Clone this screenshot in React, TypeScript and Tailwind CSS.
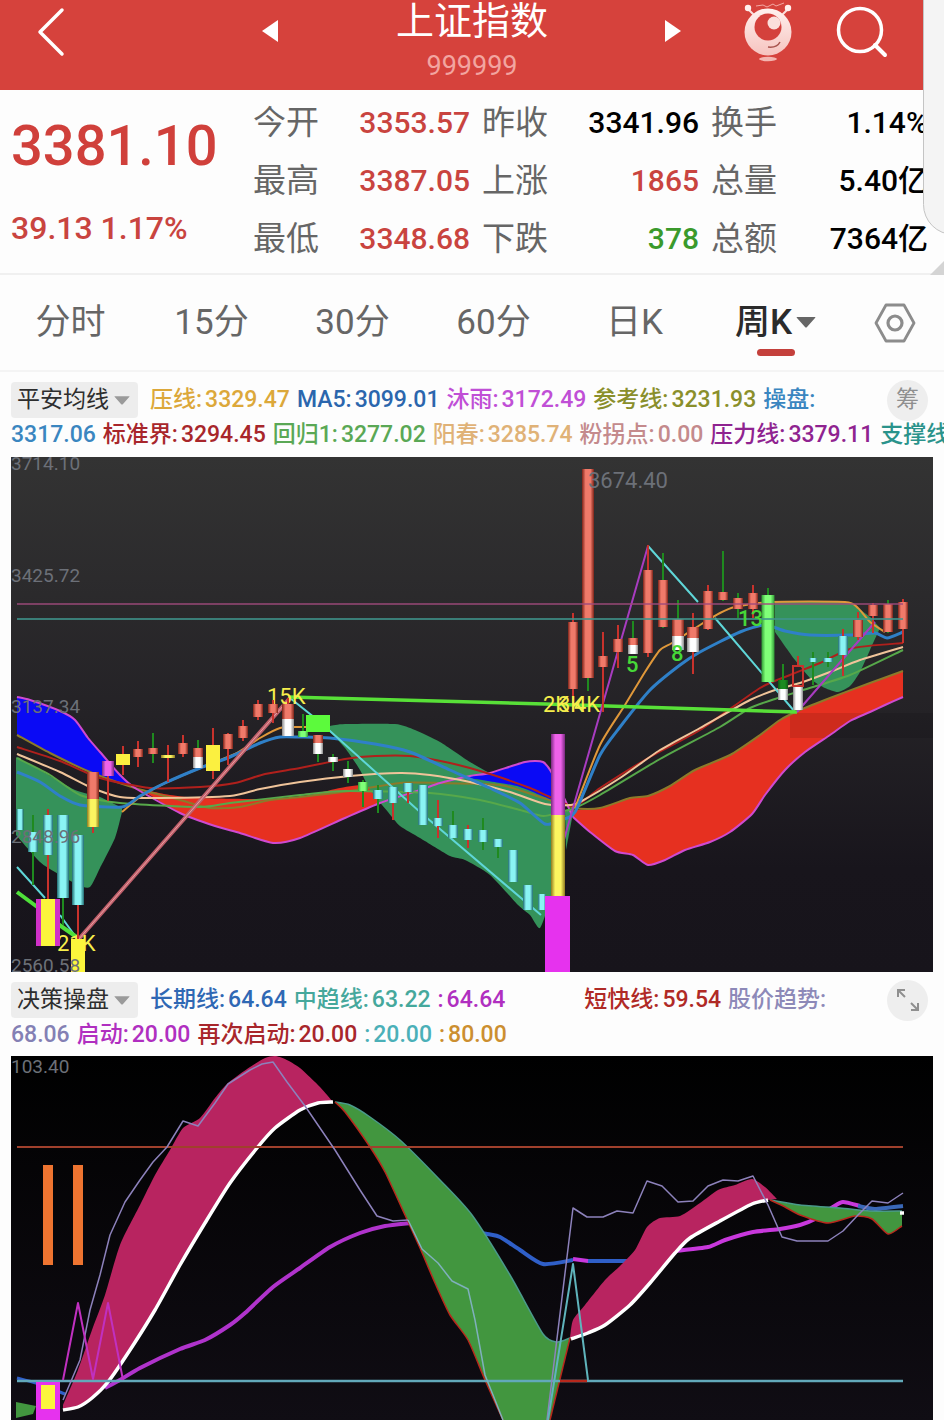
import { useState } from 'react';

type Entry = {
  name: string;
  value?: string;
  color: string;
  spaced?: boolean;
};

type Tone = 'red' | 'cyan' | 'white' | 'yellow' | 'magenta' | 'lime' | 'dark';

type Candle = {
  x: number;
  wick?: [number, number, string];
  parts: Array<[number, number, Tone]>;
  w?: number;
};

const STATS = [
  { label: '今开', value: '3353.57', color: 'text-[#c9443f]' },
  { label: '昨收', value: '3341.96', color: 'text-black' },
  { label: '换手', value: '1.14%', color: 'text-black' },
  { label: '最高', value: '3387.05', color: 'text-[#c9443f]' },
  { label: '上涨', value: '1865', color: 'text-[#c9443f]' },
  { label: '总量', value: '5.40亿', color: 'text-black' },
  { label: '最低', value: '3348.68', color: 'text-[#c9443f]' },
  { label: '下跌', value: '378', color: 'text-[#3a9a2c]' },
  { label: '总额', value: '7364亿', color: 'text-black' },
];

const PERIODS = ['分时', '15分', '30分', '60分', '日K', '周K'];

const MAIN_ROWS: Entry[][] = [
  [
    { name: '压线:', value: '3329.47', color: 'text-[#dca83a]' },
    { name: 'MA5:', value: '3099.01', color: 'text-[#2b66ad]' },
    { name: '沐雨:', value: '3172.49', color: 'text-[#c04fd6]' },
    { name: '参考线:', value: '3231.93', color: 'text-[#8a8f2b]' },
    { name: '操盘:', color: 'text-[#3a86c0]' },
  ],
  [
    { name: '', value: '3317.06', color: 'text-[#3a86c0]' },
    { name: '标准界:', value: '3294.45', color: 'text-[#a8262b]' },
    { name: '回归1:', value: '3277.02', color: 'text-[#5aa855]' },
    { name: '阳春:', value: '3285.74', color: 'text-[#e0b277]' },
    { name: '粉拐点:', value: '0.00', color: 'text-[#c48a8c]' },
    { name: '压力线:', value: '3379.11', color: 'text-[#8f2390]' },
    { name: '支撑线:', color: 'text-[#2a938b]' },
  ],
];

const SUB_ROWS: Entry[][] = [
  [
    { name: '长期线:', value: '64.64', color: 'text-[#2f68b4]' },
    { name: '中趋线:', value: '63.22', color: 'text-[#45a89c]' },
    { name: ':', value: '64.64', color: 'text-[#b02fc0]' },
    { name: '短快线:', value: '59.54', color: 'text-[#b02a26]', spaced: true },
    { name: '股价趋势:', color: 'text-[#8d89b8]' },
  ],
  [
    { name: '', value: '68.06', color: 'text-[#8480b4]' },
    { name: '启动:', value: '20.00', color: 'text-[#b02fc0]' },
    { name: '再次启动:', value: '20.00', color: 'text-[#a8262b]' },
    { name: ':', value: '20.00', color: 'text-[#4bb0b8]' },
    { name: ':', value: '80.00', color: 'text-[#cc8f30]' },
  ],
];

const R = '#c8322c';
const G = '#1f8a1f';

const CANDLES: Candle[] = [
  { x: 20, parts: [[809, 830, 'cyan']], w: 7 },
  { x: 33, wick: [815, 885, G], parts: [[832, 852, 'cyan']] },
  { x: 48, wick: [809, 900, R], parts: [[815, 855, 'cyan']] },
  { x: 63, wick: [815, 925, G], parts: [[815, 898, 'cyan']], w: 12 },
  { x: 78, wick: [835, 940, R], parts: [[835, 905, 'cyan']], w: 12 },
  { x: 93, wick: [772, 833, R], parts: [[772, 799, 'red'], [799, 827, 'yellow']], w: 12 },
  { x: 108, wick: [761, 801, R], parts: [[761, 776, 'magenta']], w: 12 },
  { x: 138, wick: [741, 767, R], parts: [[749, 757, 'red']] },
  { x: 153, wick: [733, 763, G], parts: [[748, 754, 'red']] },
  { x: 168, wick: [745, 782, R], parts: [[755, 758, 'yellow']], w: 14 },
  { x: 183, wick: [735, 757, R], parts: [[743, 754, 'red']] },
  { x: 198, wick: [740, 757, G], parts: [[748, 757, 'red'], [757, 768, 'white']] },
  { x: 228, wick: [733, 765, R], parts: [[734, 749, 'red']] },
  { x: 243, wick: [720, 741, R], parts: [[726, 738, 'red']] },
  { x: 258, wick: [700, 720, R], parts: [[704, 717, 'red']] },
  { x: 273, wick: [700, 723, R], parts: [[704, 713, 'red']] },
  { x: 288, wick: [698, 736, R], parts: [[704, 719, 'red'], [719, 736, 'white']], w: 12 },
  { x: 303, wick: [714, 737, G], parts: [[731, 737, 'lime']] },
  { x: 318, wick: [735, 762, G], parts: [[735, 743, 'red'], [743, 754, 'white']] },
  { x: 333, wick: [754, 771, G], parts: [[757, 762, 'white']] },
  { x: 348, wick: [761, 783, G], parts: [[769, 777, 'white']] },
  { x: 363, wick: [780, 807, G], parts: [[782, 791, 'lime']] },
  { x: 378, wick: [785, 813, G], parts: [[790, 799, 'cyan']] },
  { x: 393, wick: [787, 820, R], parts: [[787, 803, 'cyan']] },
  { x: 408, wick: [783, 803, R], parts: [[783, 792, 'cyan']] },
  { x: 423, parts: [[785, 825, 'cyan']] },
  { x: 438, wick: [800, 838, R], parts: [[818, 826, 'cyan']] },
  { x: 453, wick: [811, 838, G], parts: [[825, 838, 'cyan']] },
  { x: 468, wick: [825, 848, R], parts: [[829, 840, 'cyan']] },
  { x: 483, wick: [818, 850, G], parts: [[830, 842, 'cyan']] },
  { x: 498, wick: [839, 858, G], parts: [[839, 847, 'cyan']] },
  { x: 513, parts: [[850, 882, 'cyan']] },
  { x: 528, parts: [[885, 910, 'cyan']] },
  { x: 542, parts: [[894, 910, 'cyan']], w: 8 },
  { x: 558, parts: [[734, 815, 'magenta'], [815, 896, 'yellow']], w: 14 },
  { x: 573, wick: [613, 712, R], parts: [[622, 689, 'red']] },
  { x: 588, wick: [470, 691, G], parts: [[469, 678, 'red']], w: 12 },
  { x: 603, wick: [632, 712, R], parts: [[656, 667, 'red']] },
  { x: 618, wick: [625, 668, R], parts: [[639, 652, 'red']] },
  { x: 633, wick: [621, 650, G], parts: [[638, 645, 'red'], [645, 654, 'white']] },
  { x: 648, wick: [545, 657, R], parts: [[570, 653, 'red']] },
  { x: 663, wick: [553, 628, G], parts: [[580, 627, 'red']] },
  { x: 678, wick: [600, 640, G], parts: [[619, 636, 'red'], [636, 650, 'white']], w: 12 },
  { x: 693, wick: [613, 674, R], parts: [[627, 638, 'red'], [638, 652, 'white']], w: 12 },
  { x: 708, wick: [585, 630, R], parts: [[591, 629, 'red']] },
  { x: 723, wick: [551, 601, G], parts: [[592, 600, 'red']] },
  { x: 738, wick: [593, 618, G], parts: [[598, 609, 'red']] },
  { x: 753, wick: [585, 618, R], parts: [[593, 609, 'red']] },
  { x: 768, wick: [588, 682, G], parts: [[595, 682, 'lime']], w: 13 },
  { x: 783, wick: [664, 690, G], parts: [[680, 689, 'dark'], [689, 700, 'white']] },
  { x: 798, wick: [656, 667, R], parts: [[686, 710, 'white']] },
  { x: 813, wick: [652, 685, G], parts: [[658, 662, 'cyan']], w: 8 },
  { x: 828, wick: [652, 667, G], parts: [[658, 662, 'cyan']] },
  { x: 843, wick: [629, 676, R], parts: [[636, 655, 'cyan']] },
  { x: 858, wick: [612, 640, R], parts: [[620, 637, 'red']] },
  { x: 873, wick: [603, 633, R], parts: [[605, 616, 'red']] },
  { x: 888, wick: [600, 633, G], parts: [[604, 632, 'red']] },
  { x: 903, wick: [599, 643, R], parts: [[602, 629, 'red']] },
];

const TONES: Array<[Tone, string, string]> = [
  ['red', '#7d2318', '#f07a6a'],
  ['cyan', '#1f6a70', '#8af4f4'],
  ['white', '#8a8a8a', '#ffffff'],
  ['yellow', '#8f7a20', '#fbf560'],
  ['magenta', '#7a2a80', '#ee62ea'],
  ['lime', '#2f9a35', '#80ff78'],
  ['dark', '#0f5a14', '#1b8a20'],
];

// Catmull-Rom style spline through "x,y x,y ..." points, slightly tightened
function curve(points: string, start: 'M' | 'L' = 'M') {
  const p = points.split(' ').map((s) => s.split(',').map(Number));
  let d = `${start}${p[0][0]} ${p[0][1]}`;
  for (let i = 0; i < p.length - 1; i++) {
    const a = p[i - 1] ?? p[i];
    const b = p[i];
    const c = p[i + 1];
    const e = p[i + 2] ?? c;
    d += `C${b[0] + (c[0] - a[0]) / 9} ${b[1] + (c[1] - a[1]) / 9} ${c[0] - (e[0] - b[0]) / 9} ${
      c[1] - (e[1] - b[1]) / 9
    } ${c[0]} ${c[1]}`;
  }
  return d;
}

function Line({ pts, stroke, width = 2 }: { pts: string; stroke: string; width?: number }) {
  return <path d={curve(pts)} fill="none" stroke={stroke} strokeWidth={width} strokeLinejoin="round" />;
}

function Band({ top, bottom, fill }: { top: string; bottom: string; fill: string }) {
  const back = bottom.split(' ').reverse().join(' ');
  return <path d={`${curve(top)}${curve(back, 'L')}Z`} fill={fill} />;
}

function Caret({ className }: { className: string }) {
  return (
    <svg viewBox="0 0 20 12" className={className} aria-hidden>
      <path d="M1 0h18q1 0 0 1l-8 9q-1 1-2 0L1 1q-1-1 0-1z" fill="currentColor" />
    </svg>
  );
}

function Mascot() {
  return (
    <svg viewBox="0 0 50 60" className="h-[60px] w-[50px]" aria-hidden>
      <defs>
        <linearGradient id="mascot" x1="0" y1="0" x2="0" y2="1">
          <stop offset="0" stopColor="#fff1ee" />
          <stop offset="1" stopColor="#f6c3bf" />
        </linearGradient>
      </defs>
      <path d="M5 7l7 7M45 7l-7 7" stroke="#fbdedb" strokeWidth="2" />
      <circle cx="5" cy="6" r="3.2" fill="#fff0ee" />
      <circle cx="45" cy="6" r="3.2" fill="#fff0ee" />
      <path d="M13 4l7-1 4 2 6-3 3 2 8-3" fill="none" stroke="#f4a9a4" strokeWidth="1" />
      <circle cx="25" cy="30" r="23.5" fill="url(#mascot)" />
      <circle cx="25" cy="25" r="13.5" fill="#d4413c" />
      <circle cx="31" cy="21" r="6.5" fill="#fbe0dc" />
      <path d="M25 45q9 1 12-5" fill="none" stroke="#a8554f" strokeWidth="1.5" />
      <ellipse cx="25" cy="57" rx="9" ry="2.2" fill="#f3b5b0" />
    </svg>
  );
}

function Header() {
  return (
    <header className="grid h-[90px] grid-cols-[1fr_auto_1fr] items-start bg-[#d6423c] text-white">
      <div className="flex h-16 items-center pl-[37px]">
        <button type="button" aria-label="返回">
          <svg viewBox="0 0 28 50" className="h-[50px] w-7" aria-hidden>
            <path
              d="M25 3L3 25l22 22"
              fill="none"
              stroke="currentColor"
              strokeWidth="3.5"
              strokeLinecap="round"
              strokeLinejoin="round"
            />
          </svg>
        </button>
      </div>
      <div className="flex w-[420px] items-start justify-between">
        <button type="button" aria-label="上一个" className="flex h-[62px] items-center">
          <svg viewBox="0 0 17 24" className="h-6 w-[17px]" aria-hidden>
            <path d="M0 12L16 1v22z" fill="currentColor" />
          </svg>
        </button>
        <div className="text-center">
          <h1 className="text-[38px] leading-[42px]">上证指数</h1>
          <p className="text-[27px] leading-[48px] text-[#f2a5a0]">999999</p>
        </div>
        <button type="button" aria-label="下一个" className="flex h-[62px] items-center">
          <svg viewBox="0 0 17 24" className="h-6 w-[17px]" aria-hidden>
            <path d="M16 12L0 1v22z" fill="currentColor" />
          </svg>
        </button>
      </div>
      <div className="flex h-16 items-center justify-end gap-[43px] pr-[56px]">
        <button type="button" aria-label="助手">
          <Mascot />
        </button>
        <button type="button" aria-label="搜索">
          <svg viewBox="0 0 52 52" className="h-[52px] w-[52px]" aria-hidden>
            <circle cx="24" cy="24" r="21.5" fill="none" stroke="currentColor" strokeWidth="3.5" />
            <path d="M39 39l10 10" stroke="currentColor" strokeWidth="4" strokeLinecap="round" />
          </svg>
        </button>
      </div>
    </header>
  );
}

function Quote() {
  return (
    <section className="flex h-[185px] border-b-2 border-[#f0f0f0] pr-4 pl-[11px]">
      <div className="w-[242px] shrink-0 font-medium text-[#d0403b]">
        <p className="pt-6 text-[56px] leading-[64px]">3381.10</p>
        <p className="pt-[26px] text-[32px] leading-[48px] text-[#c9443f]">39.13 1.17%</p>
      </div>
      <dl className="grid flex-1 auto-rows-[58px] grid-cols-3 gap-x-3 pt-1">
        {STATS.map((s) => (
          <div key={s.label} className="flex items-center justify-between whitespace-nowrap">
            <dt className="text-[33px] leading-[58px] text-[#666666]">{s.label}</dt>
            <dd className={`text-[30px] leading-[58px] font-medium ${s.color}`}>{s.value}</dd>
          </div>
        ))}
      </dl>
    </section>
  );
}

function Periods() {
  const [active, setActive] = useState('周K');

  return (
    <nav className="flex h-[97px] border-b-2 border-[#f4f4f4]">
      {PERIODS.map((p) => (
        <button
          key={p}
          type="button"
          onClick={() => setActive(p)}
          className={`relative flex flex-1 items-center justify-center gap-1 text-[35px] leading-[48px] ${
            p === active ? 'font-medium text-[#2b2b2b]' : 'text-[#666666]'
          }`}
        >
          {p}
          {p === '周K' && <Caret className="h-3 w-5 text-[#666666]" />}
          {p === active && (
            <span className="absolute bottom-3.5 left-1/2 h-[7px] w-[38px] -translate-x-1/2 rounded-full bg-[#c4403c]" />
          )}
        </button>
      ))}
      <button
        type="button"
        aria-label="设置"
        className="flex w-[98px] shrink-0 items-center justify-center text-[#8c8c8c]"
      >
        <svg viewBox="0 0 42 40" className="h-10 w-[42px]" aria-hidden>
          <g fill="none" stroke="currentColor" strokeWidth="2.8" strokeLinejoin="round">
            <path d="M12 2h18l10 18-10 18H12L2 20z" />
            <circle cx="21" cy="20" r="7" strokeWidth="3.2" />
          </g>
        </svg>
      </button>
    </nav>
  );
}

function Entries({ items }: { items: Entry[] }) {
  return (
    <>
      {items.map((e, i) => (
        <span key={i} className={`flex gap-[3px] ${e.color} ${e.spaced ? 'ml-[72px]' : ''}`}>
          {e.name && <span>{e.name}</span>}
          {e.value && <span>{e.value}</span>}
        </span>
      ))}
    </>
  );
}

function Legend({
  title,
  rows,
  action,
}: {
  title: string;
  rows: Entry[][];
  action: React.ReactNode;
}) {
  return (
    <div className="overflow-hidden pt-2 pb-[7px] pl-[11px] text-[23px] leading-[30px] font-medium whitespace-nowrap">
      <div className="flex h-10 items-center gap-[7px] pr-4">
        <div className="relative mr-[5px] w-[127px] shrink-0">
          <select
            aria-label="指标"
            className="block h-9 w-full appearance-none rounded bg-[#ededed] pl-[6px] font-normal text-[#2e2e2e]"
          >
            <option>{title}</option>
          </select>
          <Caret className="pointer-events-none absolute top-3.5 right-2 h-[10px] w-4 text-[#9a9a9a]" />
        </div>
        <Entries items={rows[0]} />
        {action}
      </div>
      <div className="flex h-[30px] items-center gap-[7px]">
        <Entries items={rows[1]} />
      </div>
    </div>
  );
}

const SIGNAL =
  '17,735 50,753 90,772 135,788 180,800 210,808 240,807 270,800 300,797 350,791 400,783 440,783 500,785 540,797 575,808 600,808 630,798 648,796 670,786 695,770 730,755 760,735 780,720 800,710 830,698 870,683 903,671';
const LOWER_RIGHT =
  '573,817 590,832 615,851 633,855 648,865 665,860 685,850 710,842 730,832 752,814 765,795 785,770 805,752 830,735 850,721 870,712 885,705 903,697';

function MainChart() {
  return (
    <svg
      viewBox="11 457 922 515"
      className="block w-full overflow-visible"
      role="img"
      aria-label="周K线图"
    >
      <defs>
        <linearGradient id="bg" x1="0" y1="0" x2="0" y2="1">
          <stop offset="0" stopColor="#333333" />
          <stop offset="0.5" stopColor="#242226" />
          <stop offset="0.8" stopColor="#18151c" />
          <stop offset="1" stopColor="#17141b" />
        </linearGradient>
        {TONES.map(([name, edge, mid]) => (
          <linearGradient key={name} id={`tone-${name}`}>
            <stop offset="0" stopColor={edge} />
            <stop offset="0.3" stopColor={mid} />
            <stop offset="0.7" stopColor={mid} />
            <stop offset="1" stopColor={edge} />
          </linearGradient>
        ))}
      </defs>
      <rect x="11" y="457" width="922" height="515" fill="url(#bg)" />

      {/* Filled bands */}
      <Band
        top="17,697 30,700 60,711 75,720 88,738 100,752 120,775 137,789"
        bottom="17,735 50,753 90,772 137,789"
        fill="#0a0af5"
      />
      <Band
        top="16,757 40,770 75,790 100,797 122,808"
        bottom="16,835 40,862 55,872 78,885 90,887 100,868 115,838 122,812"
        fill="#35925a"
      />
      <Band
        top="145,790 170,795 200,798 260,799 300,797 340,788 370,784 435,783"
        bottom="145,792 180,813 215,826 240,833 273,843 300,838 345,818 380,803 420,790 435,784"
        fill="#e63020"
      />
      <Band
        top="330,726 345,724 395,724 415,730 440,742 470,762 490,773 520,785 552,798"
        bottom="330,732 345,748 360,770 370,790 388,812 400,826 420,838 450,856 465,860 490,875 518,905 530,915 540,928 550,900 557,870"
        fill="#35925a"
      />
      <Band
        top="463,777 490,773 525,762 543,762 553,775"
        bottom="463,777 500,783 520,787 552,800"
        fill="#0a0af5"
      />
      <Band
        top="775,602 845,602 855,606 870,617 880,628"
        bottom="775,632 795,660 812,680 825,688 838,692 850,686 860,672 870,650 880,628"
        fill="#35925a"
      />
      <Band
        top="573,810 600,808 630,798 648,796 670,786 695,770 730,755 760,735 780,720 800,710 830,698 870,683 903,671"
        bottom={LOWER_RIGHT}
        fill="#e63020"
      />
      <rect x="790" y="713" width="143" height="25" fill="#000" opacity="0.1" />
      <path d="M565 812L574 808 566 850z" fill="#35925a" />

      {/* Moving averages */}
      <Line stroke="#8c7a2a" pts={SIGNAL} />
      <Line
        stroke="#cf4ad0"
        pts="17,697 30,700 60,711 75,720 88,738 100,752 120,775 135,788 180,813 215,826 240,833 273,843 300,838 345,818 380,803 420,790 440,783 470,776 490,773 525,762 543,762 553,775 573,817"
      />
      <Line stroke="#cf4ad0" pts={LOWER_RIGHT} />
      <Line
        stroke="#b0201c"
        pts="17,747 60,761 100,778 150,788 200,787 235,783 265,774 300,768 345,759 375,756 410,756 450,763 490,774 530,788 550,797 575,806 600,788 650,757 700,730 760,688 790,675 820,663 853,648 903,643"
      />
      <Line
        stroke="#57a84a"
        pts="17,758 50,775 80,795 120,803 200,807 230,803 300,795 345,791 430,793 480,800 520,810 543,816 560,812 575,808 600,795 660,759 720,727 750,708 775,699 800,691 850,675 903,650"
      />
      <Line
        stroke="#f0c49a"
        pts="17,754 60,772 90,787 120,797 160,798 230,796 260,789 300,782 350,776 400,773 430,775 470,782 510,792 545,804 570,805 580,802 620,778 660,750 700,728 750,700 775,690 800,683 830,672 860,660 903,647"
      />
      <Line stroke="#e0983a" pts="122,812 140,797 165,783 200,768 235,754 260,738 280,728 300,727 318,727" />
      <Line
        stroke="#e0983a"
        pts="575,808 600,745 625,705 645,672 660,650 672,643 700,625 720,613 735,607 770,602 845,602 858,608 870,622 885,632"
      />
      <Line
        width={3}
        stroke="#2f80c8"
        pts="17,772 40,782 60,796 80,805 122,807 140,796 165,783 200,768 230,757 260,743 280,737 300,737 330,738 375,744 410,752 450,770 490,788 520,803 545,824 560,820 575,812 600,755 620,727 650,690 680,665 700,652 740,632 765,625 785,631 810,635 850,635 875,633 887,638 903,632"
      />

      {/* Swing lines */}
      <g fill="none">
        <path
          d="M17 867L45 898M60 915L78 940M290 698L320 722 420 812 541 915M648 546L698 602M715 618L795 712"
          stroke="#5fd6d8"
          strokeWidth="2"
        />
        <path d="M17 892L40 909M58 924L78 938" stroke="#4fe03a" strokeWidth="4" />
        <path d="M288 697L545 704 797 712" stroke="#58e038" strokeWidth="3.5" />
        <path d="M78 940L290 698" stroke="#c0606c" strokeWidth="4" />
        <path d="M78 940L290 698" stroke="#e8a0a0" strokeWidth="1" />
        <path d="M561 850L648 546M797 712L875 622" stroke="#a83cc0" strokeWidth="2" />
      </g>

      <g fontSize="22" fill="#f6ee4c">
        <text x="57" y="951">21K</text>
        <text x="267" y="704">15K</text>
      </g>

      {CANDLES.map((c) => {
        const w = c.w ?? 10;
        return (
          <g key={c.x}>
            {c.wick && (
              <rect x={c.x - 1} y={c.wick[0]} width="2" height={c.wick[1] - c.wick[0]} fill={c.wick[2]} />
            )}
            {c.parts.map(([top, bottom, tone]) => (
              <rect key={top} x={c.x - w / 2} y={top} width={w} height={bottom - top} fill={`url(#tone-${tone})`} />
            ))}
          </g>
        );
      })}

      {/* Signal blocks */}
      <rect x="36" y="899" width="24" height="47" fill="#d030c8" />
      <rect x="41" y="899" width="14" height="47" fill="#fbf53c" />
      <rect x="71" y="939" width="14" height="33" fill="#fbf53c" />
      <path d="M123 746v29M213 728v51" stroke="#c8322c" strokeWidth="2" />
      <rect x="116" y="754" width="14" height="11" fill="#fbf040" />
      <rect x="206" y="745" width="14" height="26" fill="#fbf040" />
      <rect x="306" y="715" width="24" height="17" fill="#5cfa3c" />
      <rect x="545" y="896" width="25" height="76" fill="#e632ee" />
      <rect x="793" y="666" width="10" height="20" fill="none" stroke="#c8322c" strokeWidth="2" />

      <path d="M17 604H903" stroke="#a04a7c" strokeWidth="2" opacity="0.7" />
      <path d="M17 619H903" stroke="#3f948c" strokeWidth="2" opacity="0.8" />

      <g fontSize="22" fill="#f6ee4c">
        <text x="543" y="712">2K</text>
        <text x="558" y="712">3K</text>
        <text x="574" y="712">4K</text>
      </g>
      <g fontSize="22" fill="#46d838" fontWeight="500">
        <text x="626" y="672">5</text>
        <text x="671" y="661">8</text>
        <text x="738" y="626">13</text>
      </g>
      <g fontSize="19" fill="#6c7078">
        <text x="11" y="470">3714.10</text>
        <text x="11" y="582">3425.72</text>
        <text x="11" y="713">3137.34</text>
        <text x="11" y="843">2848.96</text>
        <text x="11" y="972">2560.58</text>
        <text x="588" y="488" fontSize="22">3674.40</text>
      </g>
    </svg>
  );
}

const WHITE_LEFT =
  '63,1410 78,1407 92,1398 108,1382 130,1350 155,1310 180,1265 205,1223 230,1183 257,1148 275,1128 300,1110 318,1103 333,1102';
const WHITE_RIGHT =
  '571,1339 588,1333 605,1325 630,1305 650,1283 675,1253 690,1238 720,1221 752,1204 768,1200';
const GREEN_TOP =
  '335,1102 350,1105 370,1117 400,1140 440,1180 472,1215 510,1275 543,1334 557,1342 570,1338';
const GREEN_LEFT =
  '335,1102 345,1112 370,1147 385,1172 405,1215 420,1248 435,1283 450,1315 468,1340 485,1380 503,1420';
const TAIL_TOP = '770,1200 800,1205 840,1208 870,1211 902,1211';
const TAIL_BOTTOM = '770,1200 785,1207 800,1215 828,1223 855,1216 872,1219 888,1234 902,1226';

function TrendChart() {
  return (
    <svg
      viewBox="11 1057 922 363"
      className="block w-full overflow-visible"
      role="img"
      aria-label="决策操盘走势"
    >
      <defs>
        <linearGradient id="trend-bg" x1="0" y1="0" x2="0" y2="1">
          <stop offset="0" stopColor="#000000" />
          <stop offset="1" stopColor="#100d14" />
        </linearGradient>
      </defs>
      <rect x="11" y="1056" width="922" height="364" fill="url(#trend-bg)" />

      {/* Long and mid trend */}
      <Line width={3} stroke="#2f5fc8" pts="17,1378 36,1383 65,1394" />
      <Line width={4} stroke="#2f5fc8" pts="408,1223 450,1227 487,1234 500,1237 520,1250 543,1264 573,1260" />
      <Line width={4} stroke="#2f5fc8" pts="587,1261 630,1261" />
      <Line
        width={4}
        stroke="#b033cc"
        pts="105,1388 120,1380 140,1368 180,1349 205,1340 230,1325 245,1313 273,1287 300,1268 330,1247 360,1233 385,1226 410,1223"
      />
      <Line width={4} stroke="#c838dc" pts="573,1259 588,1261" />
      <Line
        width={4}
        stroke="#c838dc"
        pts="675,1251 708,1247 725,1240 753,1232 780,1229 800,1225 815,1219 833,1207 843,1202 860,1206"
      />
      <Line width={4} stroke="#3a68b8" pts="858,1206 875,1209 903,1206" />

      {/* Bands */}
      <Band
        top="63,1405 78,1370 92,1330 105,1295 120,1245 140,1205 155,1175 170,1150 183,1128 200,1118 215,1098 228,1083 250,1067 265,1058 275,1056 285,1059 300,1068 320,1087 333,1102"
        bottom={WHITE_LEFT}
        fill="#b82460"
      />
      <path
        d={`${curve(GREEN_TOP)}L550 1420${curve(GREEN_LEFT.split(' ').reverse().join(' '), 'L')}Z`}
        fill="#42963f"
      />
      <Band
        top="570,1338 573,1320 585,1305 605,1280 620,1266 635,1250 647,1227 660,1218 680,1216 700,1203 718,1190 735,1185 752,1179 765,1187 777,1199"
        bottom={WHITE_RIGHT}
        fill="#b82460"
      />
      <Band top={TAIL_TOP} bottom={TAIL_BOTTOM} fill="#42963f" />
      <path d="M16 1402L36 1406 33 1414 16 1418z" fill="#42963f" />

      <Line width={1.5} stroke="#4a9a8a" pts={GREEN_TOP} />
      <Line width={1.5} stroke="#4a9a8a" pts={TAIL_TOP} />
      <Line width={1.5} stroke="#b8281c" pts={GREEN_LEFT} />
      <Line width={1.5} stroke="#b8281c" pts={TAIL_BOTTOM} />
      <Line width={1.5} stroke="#b8281c" pts="550,1420 570,1338" />
      <Line width={3.5} stroke="#ffffff" pts={WHITE_LEFT} />
      <Line width={3.5} stroke="#ffffff" pts={WHITE_RIGHT} />

      <g fill="none" strokeLinejoin="round">
        <path d="M900 1213h4" stroke="#fff" strokeWidth="3.5" />
        <path d="M17 1147H903" stroke="#a0402c" strokeWidth="2" />
        <path d="M17 1381H903" stroke="#62a9ba" strokeWidth="2.5" />
        <path d="M560 1381H587" stroke="#b8281c" strokeWidth="2.5" />
        <polyline
          stroke="#8d82bc"
          strokeWidth="1.5"
          points="63,1400 80,1360 90,1310 100,1275 110,1235 125,1202 140,1180 153,1162 167,1147 183,1121 198,1126 215,1103 228,1084 250,1070 262,1064 273,1062 287,1082 305,1106 335,1150 360,1190 377,1216 393,1221 408,1220"
        />
        <polyline
          stroke="#7fb0bc"
          strokeWidth="1.5"
          points="408,1220 422,1249 438,1263 452,1281 468,1289 475,1320 485,1375 503,1420"
        />
        <polyline
          stroke="#8d82bc"
          strokeWidth="1.5"
          points="547,1420 573,1208 587,1217 603,1217 617,1211 633,1213 647,1181 662,1186 678,1202 693,1201 708,1186 723,1180 738,1181 753,1176 768,1205 782,1237 797,1241 828,1241 843,1231 858,1215 872,1201 888,1203 903,1193"
        />
        <path d="M548 1420L573 1264 588 1380" stroke="#5fb4bc" strokeWidth="2" />
        <path d="M63 1380L78 1303 93 1379 108 1303 123 1380" stroke="#c030c0" strokeWidth="2" />
      </g>

      <path d="M43 1165h10v100H43zM73 1165h10v100H73z" fill="#ee7430" />
      <rect x="36" y="1382" width="24" height="38" fill="#e632ee" />
      <rect x="41" y="1385" width="14" height="24" fill="#fbf53c" />
      <text x="11" y="1073" fontSize="19" fill="#6c7078">
        103.40
      </text>
    </svg>
  );
}

export default function App() {
  return (
    <main className="relative w-full overflow-hidden bg-[#fdfdfd] font-[Roboto,'Noto_Sans_CJK_SC',sans-serif]">
      <Header />
      <Quote />
      <Periods />

      <Legend
        title="平安均线"
        rows={MAIN_ROWS}
        action={
          <button
            type="button"
            className="ml-auto h-[41px] w-[41px] shrink-0 rounded-full bg-[#eeeeee] font-normal text-[#8f8f8f]"
          >
            筹
          </button>
        }
      />
      <div className="px-[11px]">
        <MainChart />
      </div>

      <Legend
        title="决策操盘"
        rows={SUB_ROWS}
        action={
          <button
            type="button"
            aria-label="展开"
            className="ml-auto flex h-[41px] w-[41px] shrink-0 items-center justify-center rounded-full bg-[#eeeeee] text-[#8f8f8f]"
          >
            <svg viewBox="0 0 24 24" className="h-6 w-6" aria-hidden>
              <path
                d="M2 9V2h7M2 2l7 7M22 15v7h-7M22 22l-7-7"
                fill="none"
                stroke="currentColor"
                strokeWidth="2"
              />
            </svg>
          </button>
        }
      />
      <div className="px-[11px]">
        <TrendChart />
      </div>

      {/* Edge panel handle sliding over the page */}
      <div className="absolute -top-8 -right-10 h-[267px] w-[61px] rounded-[32px] border border-[#c4c4c4] bg-[#f4f4f4]" />
      <svg viewBox="0 0 14 14" className="absolute top-[261px] right-0 h-3.5 w-3.5" aria-hidden>
        <path d="M14 0v14H0z" fill="#d4d4d4" />
      </svg>
    </main>
  );
}
